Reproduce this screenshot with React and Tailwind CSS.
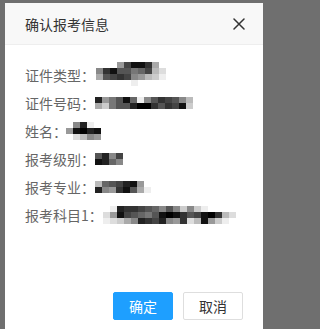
const FONT = { fontFamily: '"Noto Sans CJK SC", "Noto Sans", sans-serif' };

const rows = [
  {
    label: "证件类型：",
    at: "ml-[1px] -mt-[2px]",
    cells: [
      ["fff", "fff", "fff", "999", "444", "111", "111", "333", "aaa", "fff"],
      ["888", "333", "111", "555", "555", "777", "666", "444", "bbb", "ddd"],
      ["aaa", "555", "444", "333", "444", "888", "999", "bbb", "ccc", "eee"],
      ["fff", "fff", "fff", "fff", "fff", "eee", "fff", "fff", "fff", "fff"],
    ],
  },
  {
    label: "证件号码：",
    at: "",
    cells: [
      ["222", "999", "777", "555", "111", "666", "eee", "888", "555", "333", "444", "555", "888", "bbb"],
      ["aaa", "ccc", "777", "555", "555", "222", "000", "000", "333", "555", "333", "444", "111", "ccc"],
    ],
  },
  {
    label: "姓名：",
    at: "-ml-[1px]",
    cells: [
      ["fff", "888", "222", "eee", "fff"],
      ["999", "111", "000", "222", "111"],
      ["fff", "ddd", "bbb", "888", "999"],
    ],
  },
  {
    label: "报考级别：",
    at: "",
    cells: [
      ["555", "222", "888", "444"],
      ["111", "222", "666", "888"],
    ],
  },
  {
    label: "报考专业：",
    at: "",
    cells: [
      ["bbb", "666", "555", "444", "222", "111", "999", "fff"],
      ["222", "888", "999", "333", "111", "555", "aaa", "eee"],
    ],
  },
  {
    label: "报考科目1：",
    at: "",
    cells: [
      ["fff", "eee", "222", "333", "333", "444", "555", "666", "888", "555", "888", "ccc", "888", "ccc", "eee", "fff", "fff", "fff", "fff"],
      ["ddd", "999", "111", "444", "555", "666", "777", "555", "111", "000", "111", "333", "555", "444", "111", "000", "333", "bbb", "ddd"],
      ["eee", "ddd", "ccc", "aaa", "888", "222", "333", "444", "222", "888", "999", "333", "ddd", "bbb", "111", "999", "ccc", "eee", "fff"],
    ],
  },
];

function Mosaic({ cells }) {
  return (
    <div className="flex flex-col blur-[0.7px]">
      {cells.map((row, i) => (
        <div key={i} className="flex">
          {row.map((c, j) => (
            <span
              key={j}
              className="block w-[7px] h-[6px]"
              style={{ backgroundColor: "#" + c }}
            />
          ))}
        </div>
      ))}
    </div>
  );
}

export default function App() {
  return (
    <main className="w-full h-screen min-h-[329px] bg-[#6f6f6f] pt-[3px] pl-[5px] overflow-hidden" style={FONT}>
      <div className="w-[258px] h-[326px] bg-white flex flex-col">
        <header className="h-[42px] bg-[#f8f8f8] border-b border-[#eeeeee] flex items-center justify-between pl-[20px] pr-[18px]">
          <h1 className="text-[14px] text-[#333333] leading-none">确认报考信息</h1>
          <svg width="12" height="12" viewBox="0 0 12 12" className="text-[#333333]">
            <path d="M1 1 L11 11 M11 1 L1 11" stroke="currentColor" strokeWidth="1.5" strokeLinecap="round" />
          </svg>
        </header>

        <section className="pt-[16px] pl-[20px] flex flex-col">
          {rows.map((row) => (
            <div key={row.label} className="h-[28px] flex items-center">
              <span className="text-[14px] text-[#666666]">{row.label}</span>
              <div className={row.at}>
                <Mosaic cells={row.cells} />
              </div>
            </div>
          ))}
        </section>

        <footer className="mt-auto pb-[9px] pr-[20px] flex justify-end gap-[10px]">
          <button className="h-[28px] px-[15px] bg-[#1e9fff] border border-[#1e9fff] rounded-[2px] text-white text-[14px] leading-none">
            确定
          </button>
          <button className="h-[28px] px-[15px] bg-white border border-[#dedede] rounded-[2px] text-[#333333] text-[14px] leading-none">
            取消
          </button>
        </footer>
      </div>
    </main>
  );
}
